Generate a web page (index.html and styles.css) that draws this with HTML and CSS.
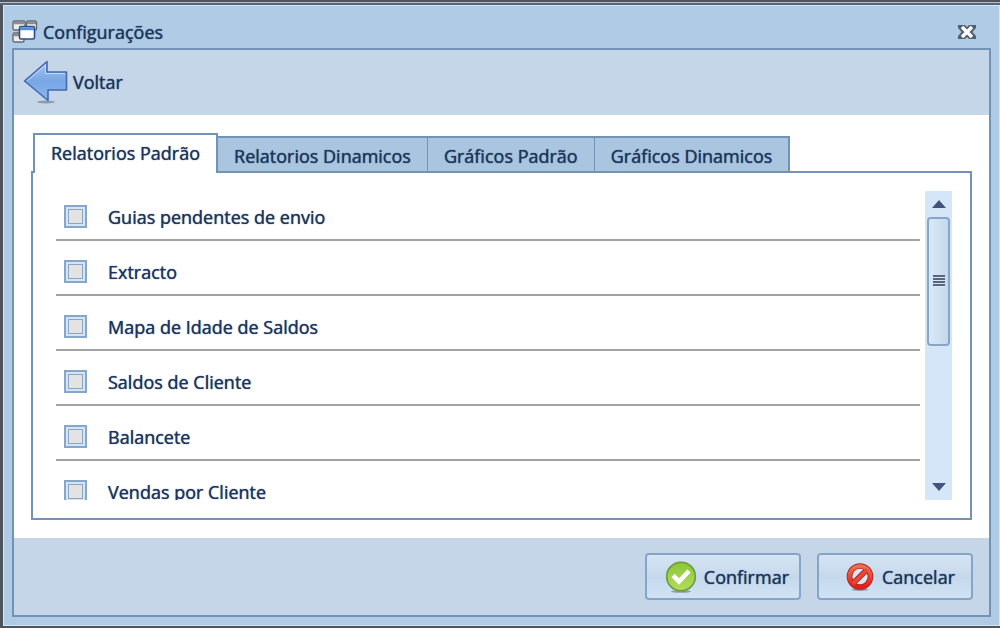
FILE: index.html
```html
<!DOCTYPE html>
<html lang="pt">
  <head>
    <meta charset="UTF-8" />
    <meta name="viewport" content="width=device-width, initial-scale=1" />
    <title>Configurações</title>
    <link rel="stylesheet" href="styles.css">
  </head>
  <body>
    <!-- ===== DIALOG ===== -->
    <main class="dialog">
      <header class="title-bar">
        <svg class="title-icon" viewBox="0 0 26 24">
          <g fill="#eee" stroke="#66686c" stroke-width="1.4">
            <rect x="1" y="1" width="12" height="9" rx="1.5"/>
            <rect x="14.500" y="1" width="10" height="9" rx="1.5"/>
            <rect x="1" y="13" width="11" height="9" rx="1.5"/>
          </g>
          <path d="M1.500 3h11M15 3h9M1.500 15h6" stroke="#8b8d90" stroke-width="2.400"/>
          <rect x="7.500" y="6.500" width="15" height="12.500" rx="1.500" fill="#fff" stroke="#2d4f86" stroke-width="1.600"/>
          <path d="M8 8.700h14" stroke="#4f8ede" stroke-width="3"/>
        </svg>
        <h1>Configurações</h1>
        <button class="close" type="button" aria-label="Fechar">
          <svg viewBox="0 0 18 16"><path d="M0 1h7l2 2L11 1h7v3L14.500 8l3.500 4v3h-7l-2-2L7 15H0v-3L3.500 8 0 4z" fill="#53616f"/><path d="M4 3l10 10M14 3L4 13" stroke="#fff" stroke-width="3.400"/></svg>
        </button>
      </header>

      <div class="content">
        <nav class="toolbar">
          <a class="back" href="#">
            <svg viewBox="0 0 46 44">
              <defs>
                <linearGradient id="arrow" x1="0" y1="0" x2="0" y2="1"><stop offset="0" stop-color="#a5c5f2"/><stop offset=".5" stop-color="#78a7e6"/><stop offset="1" stop-color="#8ab6ef"/></linearGradient>
              </defs>
              <ellipse cx="23" cy="42" rx="9" ry="1.500" fill="#8f9bab"/>
              <path d="M1.500 21L24 1.500V12h19.500v18H25v10.500z" fill="url(#arrow)" stroke="#4668ac" stroke-width="1.600" stroke-linejoin="round"/>
              <path d="M4 21L22.500 5v8.500H42" fill="none" stroke="#c4daf8" stroke-width="1"/>
            </svg>
            Voltar
          </a>
        </nav>

        <!-- === TABS === -->
        <section class="reports">
          <div class="tabs" role="tablist">
            <button class="tab active" type="button" role="tab" aria-selected="true">Relatorios Padrão</button>
            <button class="tab" type="button" role="tab">Relatorios Dinamicos</button>
            <button class="tab" type="button" role="tab">Gráficos Padrão</button>
            <button class="tab" type="button" role="tab">Gráficos Dinamicos</button>
          </div>
          <div class="panel" role="tabpanel">
            <ul class="list">
              <li><label><input type="checkbox" />Guias pendentes de envio</label></li>
              <li><label><input type="checkbox" />Extracto</label></li>
              <li><label><input type="checkbox" />Mapa de Idade de Saldos</label></li>
              <li><label><input type="checkbox" />Saldos de Cliente</label></li>
              <li><label><input type="checkbox" />Balancete</label></li>
              <li><label><input type="checkbox" />Vendas por Cliente</label></li>
            </ul>
            <div class="scrollbar">
              <button class="step" type="button" aria-label="Subir"><svg viewBox="0 0 14 8"><path d="M0 8l7-8 7 8z"/></svg></button>
              <div class="track"><div class="thumb"></div></div>
              <button class="step" type="button" aria-label="Descer"><svg viewBox="0 0 14 8"><path d="M0 0h14L7 8z"/></svg></button>
            </div>
          </div>
        </section>

        <!-- === ACTIONS === -->
        <footer class="actions">
          <button class="action" type="button">
            <svg viewBox="0 0 32 32">
              <defs><linearGradient id="ok" x1="0" y1="0" x2="0" y2="1"><stop offset="0" stop-color="#8cc63a"/><stop offset="1" stop-color="#b4dc5c"/></linearGradient></defs>
              <ellipse cx="16" cy="30.500" rx="10" ry="1.300" fill="#8c9cae"/>
              <circle cx="16" cy="15.500" r="14.300" fill="url(#ok)" stroke="#6a9c3c" stroke-width="1.600"/>
              <path d="M8 14.500l6 6 10-10.500" fill="none" stroke="#fff" stroke-width="4.600"/>
            </svg>
            Confirmar
          </button>
          <button class="action" type="button">
            <svg viewBox="0 0 32 32">
              <defs><linearGradient id="no" x1="0" y1="0" x2="0" y2="1"><stop offset="0" stop-color="#f0704c"/><stop offset="1" stop-color="#e81c1c"/></linearGradient></defs>
              <ellipse cx="16" cy="29.500" rx="9" ry="1.300" fill="#8c9cae"/>
              <circle cx="16" cy="15.500" r="11.200" fill="#dce5f2" stroke="#a42a28" stroke-width="6"/>
              <path d="M9 22.500l14-14" stroke="#a42a28" stroke-width="6"/>
              <circle cx="16" cy="15.500" r="11.200" fill="none" stroke="url(#no)" stroke-width="4"/>
              <path d="M8.500 23l15-15" stroke="#ea4832" stroke-width="4"/>
            </svg>
            Cancelar
          </button>
        </footer>
      </div>
    </main>
  </body>
</html>
```
FILE: styles.css
```css
:root {        /* palette */
  --c-frame: #b0cbe6;
  --c-bar: #c4d6e8;
  --c-line: #7292b6;
  --c-text: #1d355c;
}
*,*::before,*::after{box-sizing:border-box;margin:0;padding:0}
body{height:100vh;min-height:420px;display:flex;flex-direction:column;padding:5px 0 2px 3px;background:linear-gradient(#50545d 2px,#b9bfca 2px,#b9bfca 3px,#5c6578 3px,#5c6578 5px,#50545d 5px);color:var(--c-text);font:500 18px/24px "Open Sans","Noto Sans",sans-serif;text-shadow:0 0 1px var(--c-text)}
button{font:inherit;color:inherit;text-shadow:inherit;background:none;border:none;cursor:pointer}
a{color:inherit;text-decoration:none}

/* ===== DIALOG ===== */
.dialog{flex:1;min-height:0;display:flex;flex-direction:column;padding:0 8px 8px;background:var(--c-frame);border:1px solid #d5e6f7}
.title-bar{height:42px;flex:none;display:flex;align-items:center;gap:5px;padding:9px 15px 0 0}
.title-bar h1{flex:1;font-size:18px;font-weight:500}
.title-icon{width:26px;height:24px}
.close{width:18px;height:16px;display:grid}
.content{flex:1;min-height:0;display:flex;flex-direction:column;background:#fff;border:2px solid var(--c-line)}

/* toolbar */
.toolbar{height:65px;flex:none;display:flex;align-items:center;padding:0 9px 2px;background:var(--c-bar)}
.back{display:flex;align-items:center;gap:4px}
.back svg{width:46px;height:44px}

/* ===== TABS ===== */
.reports{flex:1;min-height:0;display:flex;flex-direction:column;padding:18px 17px}
.tabs{display:flex;align-items:flex-end;padding-left:2px}
.tab{height:35px;padding:2px 16px 0;background:#a9c5df;border:2px solid var(--c-line);border-width:2px 1px 0 0}
.tab.active{height:40px;margin-bottom:-2px;padding-bottom:3px;padding-top:0;background:#fff;border-width:2px;border-bottom:none;position:relative}
.tab:last-child{border-right-width:2px}
.panel{flex:1;min-height:0;display:flex;gap:5px;padding:13px 18px 18px 23px;border:2px solid var(--c-line)}

/* report list */
.list{flex:1;overflow:hidden;list-style:none}
.list li{height:55px;padding:8px 8px 0;border-bottom:2px solid #a3a3a3}
.list label{display:flex;align-items:center;gap:21px;height:45px}
.list input{appearance:none;flex:none;width:23px;height:23px;background:#e3e3e3;border:2px solid #86a6cb;box-shadow:inset 0 0 0 2px #d3e5f8,inset 0 0 0 3px #8fa5bd}

/* scrollbar */
.scrollbar{width:27px;flex:none;display:flex;flex-direction:column;margin-top:5px;background:#d5e6f8}
.step{height:26px;display:grid;place-items:center}
.step svg{width:14px;height:8px;fill:#405579}
.track{flex:1;padding:0 2px}
.thumb{height:50%;display:grid;place-items:center;background:linear-gradient(90deg,#d9e9f8,#c4d9eb);border:2px solid #86a6c9;border-radius:4px}
.thumb::after{content:"";width:12px;height:12px;background:repeating-linear-gradient(#596583 0 2px,#dae6f3 2px 3px)}

/* ===== ACTIONS ===== */
.actions{height:77px;flex:none;display:flex;align-items:center;justify-content:flex-end;gap:16px;padding:0 16px;background:var(--c-bar)}
.action{width:156px;height:47px;display:flex;align-items:center;justify-content:flex-end;gap:7px;padding:0 10px;background:linear-gradient(#d5e4f4,#c6d9ec 50%,#d0e2f4);border:2px solid #86a6c9;border-radius:4px}
.action svg{width:32px;height:32px}
.action:last-child{padding-right:16px}
.action:last-child svg{width:30px;height:30px}
```
